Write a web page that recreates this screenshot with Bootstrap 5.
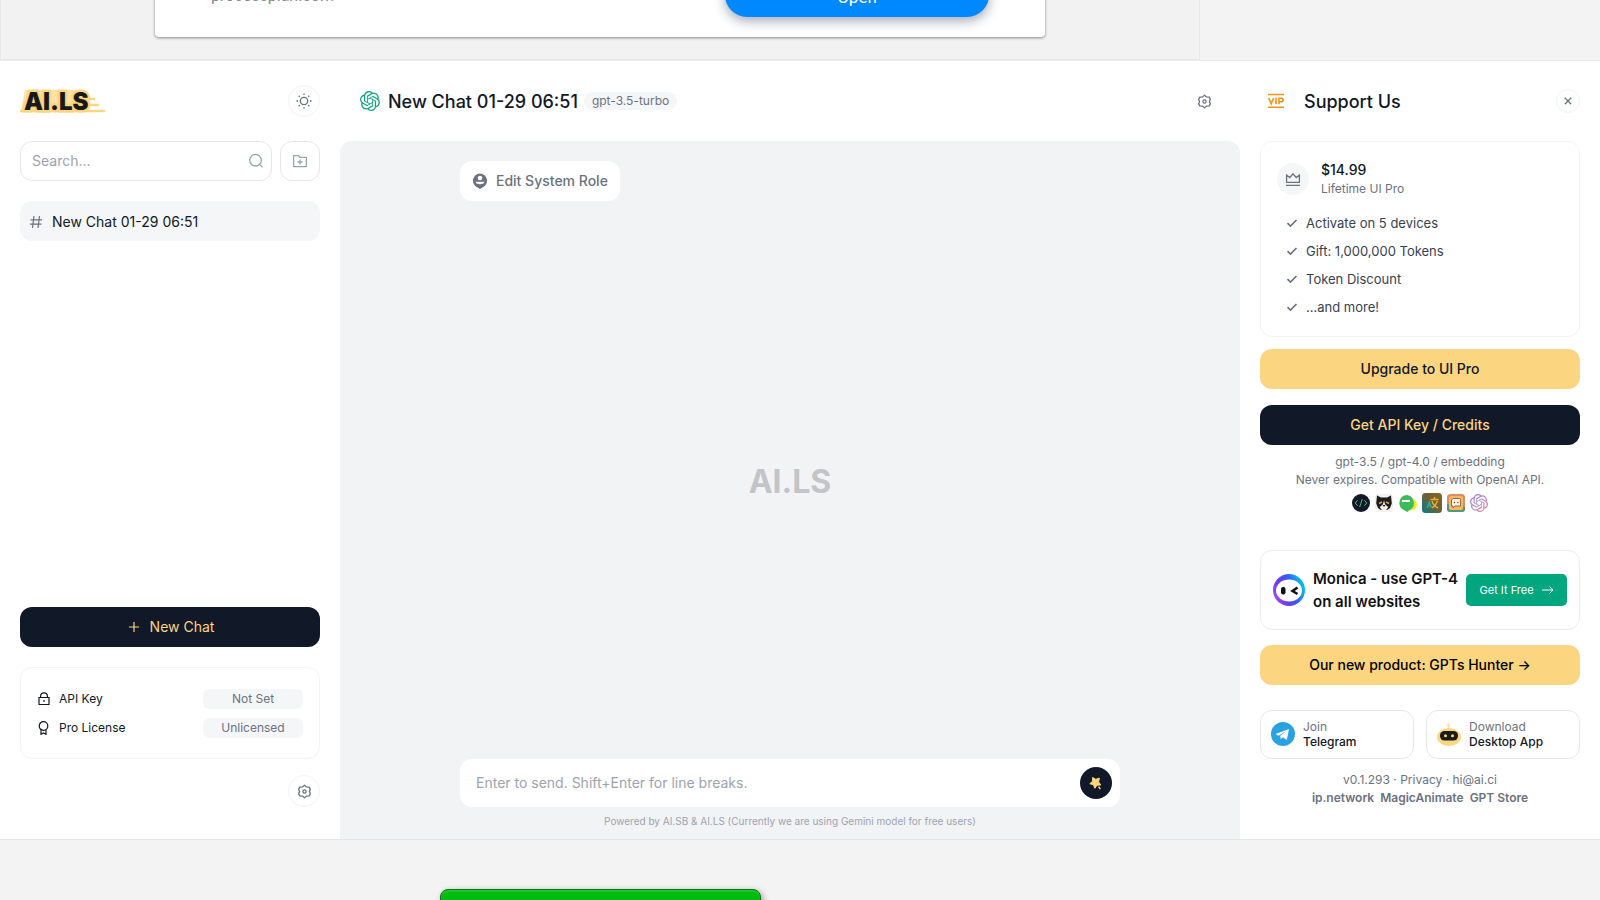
<!DOCTYPE html>
<html lang="en">
<head>
<meta charset="utf-8">
<meta name="viewport" content="width=device-width, initial-scale=1">
<title>AI.LS</title>
<link href="https://cdn.jsdelivr.net/npm/bootstrap@5.3.0/dist/css/bootstrap.min.css" rel="stylesheet">
<style>
:root { --ink: #111827; --slate: #374151; --muted: #6b7280; --faint: #9ca3af; --line: #e5e7eb; --soft: #f3f4f6; --pale: #f5f6f8; --gold: #fcd581; }
body { font-family: Inter, "Liberation Sans", sans-serif; font-size: 14px; line-height: 20px; color: var(--ink); background: #f3f3f3; }
svg { flex: none; display: block; }
a { color: inherit; text-decoration: none; }

.ad-strip { height: 60px; width: 75%; border: 1px solid #e6e6e6; border-top: 0; padding: 0 154px 22px; font-family: Roboto, sans-serif; font-size: 16px; background: #f2f2f2; }
.ad-box { background: #fff; border-radius: 4px; box-shadow: 0 1px 3px rgba(0,0,0,.45); height: 120px; padding: 0 56px 20px; }
.ad-site { color: #8a8a8a; padding-bottom: 11px; }
.ad-open { width: 264px; height: 44px; border-radius: 22px; background: #0088ff; color: #fff; font-size: 17px; line-height: 20px; border: 0; box-shadow: 0 4px 12px rgba(30,40,80,.4); padding: 4px 0 0; }
.promo-strip { height: 60px; }
.promo { margin-left: 440px; margin-top: 49px; width: 321px; height: 60px; border-radius: 8px; border: 1px solid #1c6b24; background: #00bb10; box-shadow: 2px 2px 6px rgba(0,0,0,.35), inset 0 2px 1px #17c926; }

.app { background: #fff; border-top: 1px solid #ebebeb; border-bottom: 1px solid var(--line); }
.side-left { width: 340px; padding: 0 20px 32px; }
.side-right { width: 360px; padding: 0 20px; }
.bar-top { height: 80px; flex: none; }
.ttl { font-size: 18px; line-height: 28px; font-weight: 500; margin: 0; padding-top: 2px; }
.vip { margin: 0 20px 0 8px; }
.round-btn { width: 32px; height: 32px; border-radius: 50%; border: 1px solid var(--soft); background: #fff; color: var(--muted); padding: 0; }
.round-sm { width: 24px; height: 24px; }
.box { border: 1px solid var(--soft); border-radius: 12px; }
.box-line { border-color: var(--line); }
.search { height: 40px; min-width: 0; color: var(--faint); padding: 0 7px; }
.search input { border: 0; outline: 0; background: none; min-width: 0; }
input::placeholder { color: var(--faint); opacity: 1; }
.square-btn { width: 40px; height: 40px; background: #fff; color: var(--faint); padding: 0; }
.chat-item { height: 40px; border-radius: 12px; background: var(--pale); padding: 1px 9px 0; gap: 9px; }
.cta { height: 40px; flex: none; border: 0; border-radius: 12px; font-size: 14px; line-height: 20px; font-weight: 500; width: 100%; }
.cta-dark { background: var(--ink); color: var(--gold); }
.cta-gold { background: var(--gold); color: var(--ink); }
.tiny { font-size: 12px; line-height: 18px; }
.state { width: 100px; height: 20px; border-radius: 6px; background: var(--pale); color: var(--muted); text-align: center; border: 0; padding: 0; }
.keys { padding: 21px 16px 20px; gap: 9px; margin: 20px 0 16px; }
.muted { color: var(--muted); }
.pill { background: var(--pale); color: var(--muted); border-radius: 9px; padding: 0 8px; margin-left: 6px; }
.stage { background: #f2f3f5; border-radius: 12px 12px 0 0; padding: 20px 120px 10px; }
.role { height: 40px; border: 0; border-radius: 12px; background: #fff; color: var(--muted); font-weight: 500; padding: 0 12px; gap: 8px; }
.watermark { font-size: 32px; line-height: 40px; font-weight: 700; color: #c3c4c8; padding-top: 4px; }
.composer { height: 48px; border-radius: 12px; background: #fff; padding: 0 8px 0 16px; }
.composer input { border: 0; outline: 0; background: none; }
.send { width: 32px; height: 32px; border-radius: 50%; border: 0; background: var(--ink); padding: 0; }
.powered { font-size: 10px; line-height: 16px; color: var(--faint); margin-top: 6px; }
.plan { padding: 18px 16px 19px; margin-bottom: 12px; }
.price { font-weight: 500; }
.crown { width: 32px; height: 32px; border-radius: 50%; background: var(--pale); color: var(--muted); }
.perks { font-size: 13px; line-height: 20px; color: var(--slate); padding-left: 9px; margin-top: 15px; gap: 8px; }
.apps { gap: 5px; margin-top: 4px; }
.monica { height: 80px; padding: 0 12px; gap: 8px; margin-top: 37px; color: #111; border-color: #ececee; }
.monica strong { font-size: 15px; line-height: 23px; font-weight: 600; white-space: nowrap; }
.free-btn { flex: none; width: 101px; height: 32px; border: 0; border-radius: 5px; background: #00a67d; color: #fff; font-size: 11px; padding: 0; }
.product { margin-top: 15px; }
.downloads { gap: 12px; margin: 25px 0 12px; }
.dl { flex: 1 1 0; height: 49px; padding: 0 10px 1px; line-height: 15px; font-size: 12px; gap: 8px; }
.dl span span { display: block; }
.dl-name { font-weight: 500; }
</style>
</head>
<body class="vh-100 d-flex flex-column overflow-hidden">
<svg width="0" height="0" class="position-absolute" aria-hidden="true">
  <defs>
    <linearGradient id="g-ai" x1="0" y1="0" x2="1" y2="1"><stop offset="0" stop-color="#8b6fe8"/><stop offset=".5" stop-color="#b78bc8"/><stop offset="1" stop-color="#ef7d8c"/></linearGradient>
    <linearGradient id="g-tr" x1="1" y1="0" x2="0" y2="1"><stop offset="0" stop-color="#8a6420"/><stop offset=".5" stop-color="#6b6238"/><stop offset="1" stop-color="#087a88"/></linearGradient>
    <linearGradient id="g-mo" x1="0" y1="1" x2="1" y2=".6"><stop offset="0" stop-color="#c04bf5"/><stop offset=".4" stop-color="#6a3cf2"/><stop offset=".7" stop-color="#3b5bf5"/><stop offset="1" stop-color="#08b5e8"/></linearGradient>
    <symbol id="i-ai" viewBox="0 0 24 24"><path d="M22.2819 9.8211a5.9847 5.9847 0 0 0-.5157-4.9108 6.0462 6.0462 0 0 0-6.5098-2.9A6.0651 6.0651 0 0 0 4.9807 4.1818a5.9847 5.9847 0 0 0-3.9977 2.9 6.0462 6.0462 0 0 0 .7427 7.0966 5.98 5.98 0 0 0 .511 4.9107 6.051 6.051 0 0 0 6.5146 2.9001A5.9847 5.9847 0 0 0 13.2599 24a6.0557 6.0557 0 0 0 5.7718-4.2058 5.9894 5.9894 0 0 0 3.9977-2.9001 6.0557 6.0557 0 0 0-.7475-7.0729zm-9.022 12.6081a4.4755 4.4755 0 0 1-2.8764-1.0408l.1419-.0804 4.7783-2.7582a.7948.7948 0 0 0 .3927-.6813v-6.7369l2.02 1.1686a.071.071 0 0 1 .038.052v5.5826a4.504 4.504 0 0 1-4.4945 4.4944zm-9.6607-4.1254a4.4708 4.4708 0 0 1-.5346-3.0137l.142.0852 4.783 2.7582a.7712.7712 0 0 0 .7806 0l5.8428-3.3685v2.3324a.0804.0804 0 0 1-.0332.0615L9.74 19.9502a4.4992 4.4992 0 0 1-6.1408-1.6464zM2.3408 7.8956a4.485 4.485 0 0 1 2.3655-1.9728V11.6a.7664.7664 0 0 0 .3879.6765l5.8144 3.3543-2.0201 1.1685a.0757.0757 0 0 1-.071 0l-4.8303-2.7865A4.504 4.504 0 0 1 2.3408 7.872zm16.5963 3.8558L13.1038 8.364 15.1192 7.2a.0757.0757 0 0 1 .071 0l4.8303 2.7913a4.4944 4.4944 0 0 1-.6765 8.1042v-5.6772a.79.79 0 0 0-.407-.667zm2.0107-3.0231l-.142-.0852-4.7735-2.7818a.7759.7759 0 0 0-.7854 0L9.409 9.2297V6.8974a.0662.0662 0 0 1 .0284-.0615l4.8303-2.7866a4.4992 4.4992 0 0 1 6.6802 4.66zM8.3065 12.863l-2.02-1.1638a.0804.0804 0 0 1-.038-.0567V6.0742a4.4992 4.4992 0 0 1 7.3757-3.4537l-.142.0805L8.704 5.459a.7948.7948 0 0 0-.3927.6813zm1.0976-2.3654l2.602-1.4998 2.6069 1.4998v2.9994l-2.5974 1.4997-2.6067-1.4997Z"/></symbol>
    <symbol id="i-gear" viewBox="0 0 16 16"><g fill="none" stroke="currentColor" stroke-width="1.400" stroke-linejoin="round"><path d="M8 1.200 10.100 3.100 13 3.300 14.200 5.500 13.300 8 14.200 10.500 13 12.700 10.100 12.900 8 14.800 5.900 12.900 3 12.700 1.800 10.500 2.700 8 1.800 5.500 3 3.300 5.900 3.100z"/><circle cx="8" cy="8" r="1.700"/></g></symbol>
    <symbol id="i-check" viewBox="0 0 12 12"><path d="M1.500 6.200 4.500 9 10.500 3" fill="none" stroke="currentColor" stroke-width="1.700"/></symbol>
  </defs>
</svg>

<div class="ad-strip flex-shrink-0 overflow-hidden d-flex flex-column justify-content-end">
  <div class="ad-box flex-shrink-0 d-flex justify-content-between align-items-end">
    <span class="ad-site">processplan.com</span>
    <button class="ad-open" type="button">Open</button>
  </div>
</div>

<div class="app flex-grow-1 d-flex">
  <aside class="side-left flex-shrink-0 d-flex flex-column">
    <div class="bar-top d-flex align-items-center justify-content-between">
      <a href="#" aria-label="AI.LS">
        <svg width="90" height="32" viewBox="0 -3 90 32">
          <path d="M60 11h15M60 17h19M0 23h85" stroke="#fcd581" stroke-width="2.500"/>
          <path d="M5 2h60v21H1z" fill="#fcd581" fill-opacity=".7"/>
          <text x="4" y="22" font-family="Inter, sans-serif" font-size="24" font-weight="900" fill="#191919" stroke="#fcd581" stroke-width="5" paint-order="stroke">AI.LS</text>
        </svg>
      </a>
      <button class="round-btn d-flex align-items-center justify-content-center" type="button" aria-label="Theme">
        <svg width="16" height="16" viewBox="0 0 16 16" fill="none" stroke="currentColor" stroke-width="1.300"><circle cx="8" cy="8" r="3.700"/><path d="M8 .5v1.600M8 13.900v1.600M.5 8h1.600M13.900 8h1.600M2.700 2.700l1.100 1.100M12.200 12.200l1.100 1.100M2.700 13.300l1.100-1.100M12.200 3.800l1.100-1.100"/></svg>
      </button>
    </div>
    <div class="d-flex gap-2 mb-3 pb-1">
      <label class="search box box-line flex-grow-1 d-flex align-items-center">
        <input class="flex-grow-1 p-0 ms-1" type="text" placeholder="Search..." aria-label="Search">
        <svg width="16" height="16" viewBox="0 0 16 16" fill="none" stroke="currentColor" stroke-width="1.300"><circle cx="7.500" cy="7.200" r="5.800"/><path d="m11.600 11.400 3 3"/></svg>
      </label>
      <button class="square-btn flex-shrink-0 box box-line d-flex align-items-center justify-content-center" type="button" aria-label="New folder">
        <svg width="14" height="14" viewBox="0 0 14 14" fill="none" stroke="currentColor" stroke-width="1.300"><path d="M.6 1.600h4.700l1.500 1.700h6.600v9.400H.6zM7 5.500v5M4.500 8h5"/></svg>
      </button>
    </div>
    <a href="#" class="chat-item d-flex align-items-center">
      <svg width="14" height="14" viewBox="0 0 14 14" fill="none" stroke="#6b7280" stroke-width="1.200"><path d="M5 1 3.500 13M10.500 1 9 13M1.500 4.800h11.500M1 9.200h11.500"/></svg>
      <span>New Chat 01-29 06:51</span>
    </a>
    <button class="cta cta-dark mt-auto d-flex align-items-center justify-content-center gap-2 fw-normal" type="button">
      <svg width="16" height="16" viewBox="0 0 16 16" stroke="currentColor" stroke-width="1.200"><path d="M8 3v10M3 8h10"/></svg>
      <span>New Chat</span>
    </button>
    <div class="box keys tiny d-flex flex-column">
      <div class="d-flex align-items-center gap-2">
        <svg width="14" height="14" viewBox="0 0 14 14" fill="none" stroke="currentColor" stroke-width="1.200"><path d="M2 5.500h10v7H2zM3.600 5.500V4.300a3.400 3.400 0 0 1 6.800 0v1.200M7 8v2"/></svg>
        <span class="flex-grow-1">API Key</span><button class="state" type="button">Not Set</button>
      </div>
      <div class="d-flex align-items-center gap-2">
        <svg width="14" height="14" viewBox="0 0 14 14" fill="none" stroke="currentColor" stroke-width="1.200"><circle cx="6.500" cy="5" r="4.300"/><path d="M4 8.500v4.800l2.500-1.300L9 13.300V8.500"/></svg>
        <span class="flex-grow-1">Pro License</span><button class="state" type="button">Unlicensed</button>
      </div>
    </div>
    <button class="round-btn align-self-end d-flex align-items-center justify-content-center" type="button" aria-label="Settings"><svg width="15" height="15"><use href="#i-gear"/></svg></button>
  </aside>

  <main class="flex-grow-1 d-flex flex-column">
    <header class="bar-top d-flex align-items-center ps-3 pe-3">
      <svg class="ms-1 me-2" width="20" height="20" fill="#10a37f"><use href="#i-ai"/></svg>
      <h1 class="ttl">New Chat 01-29 06:51</h1>
      <span class="pill tiny">gpt-3.5-turbo</span>
      <button class="round-btn border-0 ms-auto me-1 d-flex align-items-center justify-content-center" type="button" aria-label="Chat settings"><svg width="15" height="15"><use href="#i-gear"/></svg></button>
    </header>
    <section class="stage flex-grow-1 d-flex flex-column">
      <button class="role align-self-start d-flex align-items-center" type="button">
        <svg width="16" height="16" viewBox="0 0 15 15"><path d="M7.500.5a6.700 6.700 0 0 1 2.200 13L7.500 15l-2.200-1.500A6.700 6.700 0 0 1 7.500.5z" fill="currentColor"/><circle cx="7.500" cy="4.700" r="2.100" fill="#fff"/><path d="M3.300 8.300h8.400a4.300 3 0 0 1-8.400 0z" fill="#fff"/></svg>
        <span>Edit System Role</span>
      </button>
      <div class="watermark flex-grow-1 d-flex align-items-center justify-content-center">AI.LS</div>
      <div class="composer d-flex align-items-center">
        <input class="flex-grow-1 p-0" type="text" placeholder="Enter to send. Shift+Enter for line breaks." aria-label="Message">
        <button class="send d-flex align-items-center justify-content-center" type="button" aria-label="Send"><svg width="16" height="16" viewBox="0 0 16 16"><path d="M4.600 2.500 7.800 4.300 11.400 3.200 10.600 6.900 12.800 9.900 9 10.200 6.900 13.300 5.400 9.800 1.800 8.700 4.600 6.300z" fill="#fcd581" stroke="#fcd581" stroke-linejoin="round"/><path d="m10.600 11.600 1.700 2.500" stroke="#fcd581" stroke-width="1.600"/></svg></button>
      </div>
      <div class="powered text-center">Powered by AI.SB &amp; AI.LS (Currently we are using Gemini model for free users)</div>
    </section>
  </main>

  <aside class="side-right flex-shrink-0 d-flex flex-column">
    <div class="bar-top d-flex align-items-center">
      <svg class="vip" width="16" height="16" viewBox="0 0 16 16"><path d="M0 1.500h16M0 14.300h16" stroke="#f59217" stroke-width="1.500"/><path d="m.8 5 2.400 5.800L5.600 5M8 4.500v6.800M11 11.300V5.200h2.400a1.700 1.700 0 0 1 0 3.500H11" fill="none" stroke="#f59217" stroke-width="1.600"/></svg>
      <h2 class="ttl flex-grow-1">Support Us</h2>
      <button class="round-btn round-sm d-flex align-items-center justify-content-center" type="button" aria-label="Close"><svg width="8" height="8" viewBox="0 0 8 8" stroke="currentColor" stroke-width="1.300"><path d="m.8.8 6.400 6.400M7.200.8.8 7.200"/></svg></button>
    </div>
    <div class="box plan">
      <div class="d-flex align-items-center gap-2">
        <span class="crown d-flex align-items-center justify-content-center"><svg width="16" height="16" viewBox="0 0 16 16" fill="none" stroke="currentColor" stroke-width="1.300"><path d="M1.600 4v7.400h12.800V4l-3.200 2.500L8 2.800 4.800 6.500zM1 14.300h14"/></svg></span>
        <div class="ms-1"><div class="price">$14.99</div><div class="tiny muted">Lifetime UI Pro</div></div>
      </div>
      <ul class="perks list-unstyled mb-0 d-flex flex-column">
        <li class="d-flex align-items-center gap-2"><svg class="muted" width="12" height="12"><use href="#i-check"/></svg>Activate on 5 devices</li>
        <li class="d-flex align-items-center gap-2"><svg class="muted" width="12" height="12"><use href="#i-check"/></svg>Gift: 1,000,000 Tokens</li>
        <li class="d-flex align-items-center gap-2"><svg class="muted" width="12" height="12"><use href="#i-check"/></svg>Token Discount</li>
        <li class="d-flex align-items-center gap-2"><svg class="muted" width="12" height="12"><use href="#i-check"/></svg>...and more!</li>
      </ul>
    </div>
    <button class="cta cta-gold mb-3" type="button">Upgrade to UI Pro</button>
    <button class="cta cta-dark mb-2" type="button">Get API Key / Credits</button>
    <div class="tiny muted text-center">gpt-3.5 / gpt-4.0 / embedding<br>Never expires. Compatible with OpenAI API.</div>
    <div class="apps d-flex justify-content-center align-items-center">
      <a href="#" aria-label="Code"><svg width="18" height="18" viewBox="0 0 18 18"><circle cx="9" cy="9" r="9" fill="#111827"/><path d="M5.500 6.300 3.300 9l2.200 2.700M12.500 6.300 14.700 9l-2.200 2.700M10.300 5l-2.600 8" fill="none" stroke="#4cb87a"/></svg></a>
      <a href="#" aria-label="Cat"><svg width="18" height="18" viewBox="0 0 18 18"><rect width="18" height="18" rx="4" fill="#f1f1f1"/><path d="M2 1.500 6 3.500h6l4-2 .8 8L15 14l-3 2H6l-3-2-1.800-4.500z" fill="#1d1d1f"/><path d="m9 6.500 1.200 4 3 2.500-2 3H6.800l-2-3 3-2.500z" fill="#f3eee8"/><path d="M4 9.500 7 8M14 9.500 11 8" stroke="#e5a33c" stroke-width="1.400"/><path d="M7.500 11h3L9 13z" fill="#222"/></svg></a>
      <a href="#" aria-label="Chat"><svg width="19" height="18" viewBox="0 0 19 18"><circle cx="13" cy="10.500" r="6" fill="#f5ea2a"/><path d="M8.300 1a8 8 0 0 1 3 15.200L9.300 18l-3-1.700A8 8 0 0 1 8.300 1z" fill="#3dba5c"/><path d="M4 7h8" stroke="#fff" stroke-width="2"/></svg></a>
      <a href="#" aria-label="Translate"><svg width="20" height="20" viewBox="0 0 20 20"><rect width="20" height="20" rx="3.500" fill="url(#g-tr)"/><path d="M8.500 6.500h8M12.500 4v2.500M10 8c1 3 3 5.500 6 7M15.500 8c-1 3-3 5.500-5.500 7" fill="none" stroke="#f1ad35" stroke-width="1.400"/><path d="m5 15 2.300-6L9.500 15M6 13h3" fill="none" stroke="#26b5ad" stroke-width="1.200"/></svg></a>
      <a href="#" aria-label="Bot"><svg width="18" height="18" viewBox="0 0 18 18"><rect width="18" height="18" rx="3.500" fill="#dc8c60"/><path d="M0 10v5q0 3 3 3h12q3 0 3-3v-2z" fill="#4c9b80"/><rect x="2" y="2" width="14" height="14" rx="2" fill="#f8b765"/><path d="M6 4.500h6.500q1 0 1 1v6.500H8l-2 1.800V12H4.500V6z" fill="#fff0df" stroke="#9c6740"/><circle cx="7.500" cy="8.500" r=".8" fill="#654"/><circle cx="10.800" cy="8.500" r=".8" fill="#654"/></svg></a>
      <a href="#" aria-label="OpenAI"><svg width="18" height="18" fill="url(#g-ai)"><use href="#i-ai"/></svg></a>
    </div>
    <div class="box monica d-flex align-items-center">
      <svg width="32" height="32" viewBox="0 0 32 32"><circle cx="16" cy="16" r="16" fill="url(#g-mo)"/><ellipse cx="16" cy="16.500" rx="13" ry="11" fill="#fff"/><rect x="8" y="13" width="4.500" height="7.500" rx="2" fill="#111"/><path d="m24.500 13.500-5 3.500 5 3" fill="none" stroke="#111" stroke-width="2.500"/></svg>
      <strong class="flex-grow-1">Monica - use GPT-4<br>on all websites</strong>
      <button class="free-btn d-flex align-items-center justify-content-center gap-2" type="button">Get It Free<svg width="12" height="10" viewBox="0 0 12 10" fill="none" stroke="currentColor"><path d="M0 5h11M7.500 1.500 11 5 7.500 8.500"/></svg></button>
    </div>
    <button class="cta cta-gold text-black product" type="button">Our new product: GPTs Hunter →</button>
    <div class="d-flex downloads">
      <a href="#" class="box box-line dl d-flex align-items-center">
        <svg width="24" height="24" viewBox="0 0 24 24"><circle cx="12" cy="12" r="12" fill="#29a3e0"/><path d="m4.500 12 13.500-5-2.200 11-4-2.700-2 2-.6-3.500L16 8.800l-8.500 5z" fill="#fff"/></svg>
        <span><span class="muted">Join</span><span class="dl-name">Telegram</span></span>
      </a>
      <a href="#" class="box box-line dl d-flex align-items-center">
        <svg width="24" height="24" viewBox="0 0 24 24"><ellipse cx="12" cy="15" rx="12" ry="9" fill="#fcd581"/><path d="m12 1-1.500 2.500h2L11.500 6" fill="none" stroke="#fcd581"/><rect x="3" y="9" width="18" height="9.500" rx="4.500" fill="#1b1b1b"/><circle cx="8.500" cy="13.700" r="1.500" fill="#fcd581"/><circle cx="15.500" cy="13.700" r="1.500" fill="#fcd581"/></svg>
        <span><span class="muted">Download</span><span class="dl-name">Desktop App</span></span>
      </a>
    </div>
    <div class="tiny muted text-center">v0.1.293 · <a href="#">Privacy</a> · <a href="#">hi@ai.ci</a><br><span class="fw-semibold"><a href="#">ip.network</a>&nbsp; <a href="#">MagicAnimate</a>&nbsp; <a href="#">GPT Store</a></span></div>
  </aside>
</div>

<div class="promo-strip flex-shrink-0 overflow-hidden"><div class="promo"></div></div>
<script src="https://cdn.jsdelivr.net/npm/bootstrap@5.3.0/dist/js/bootstrap.bundle.min.js"></script>
</body>
</html>
